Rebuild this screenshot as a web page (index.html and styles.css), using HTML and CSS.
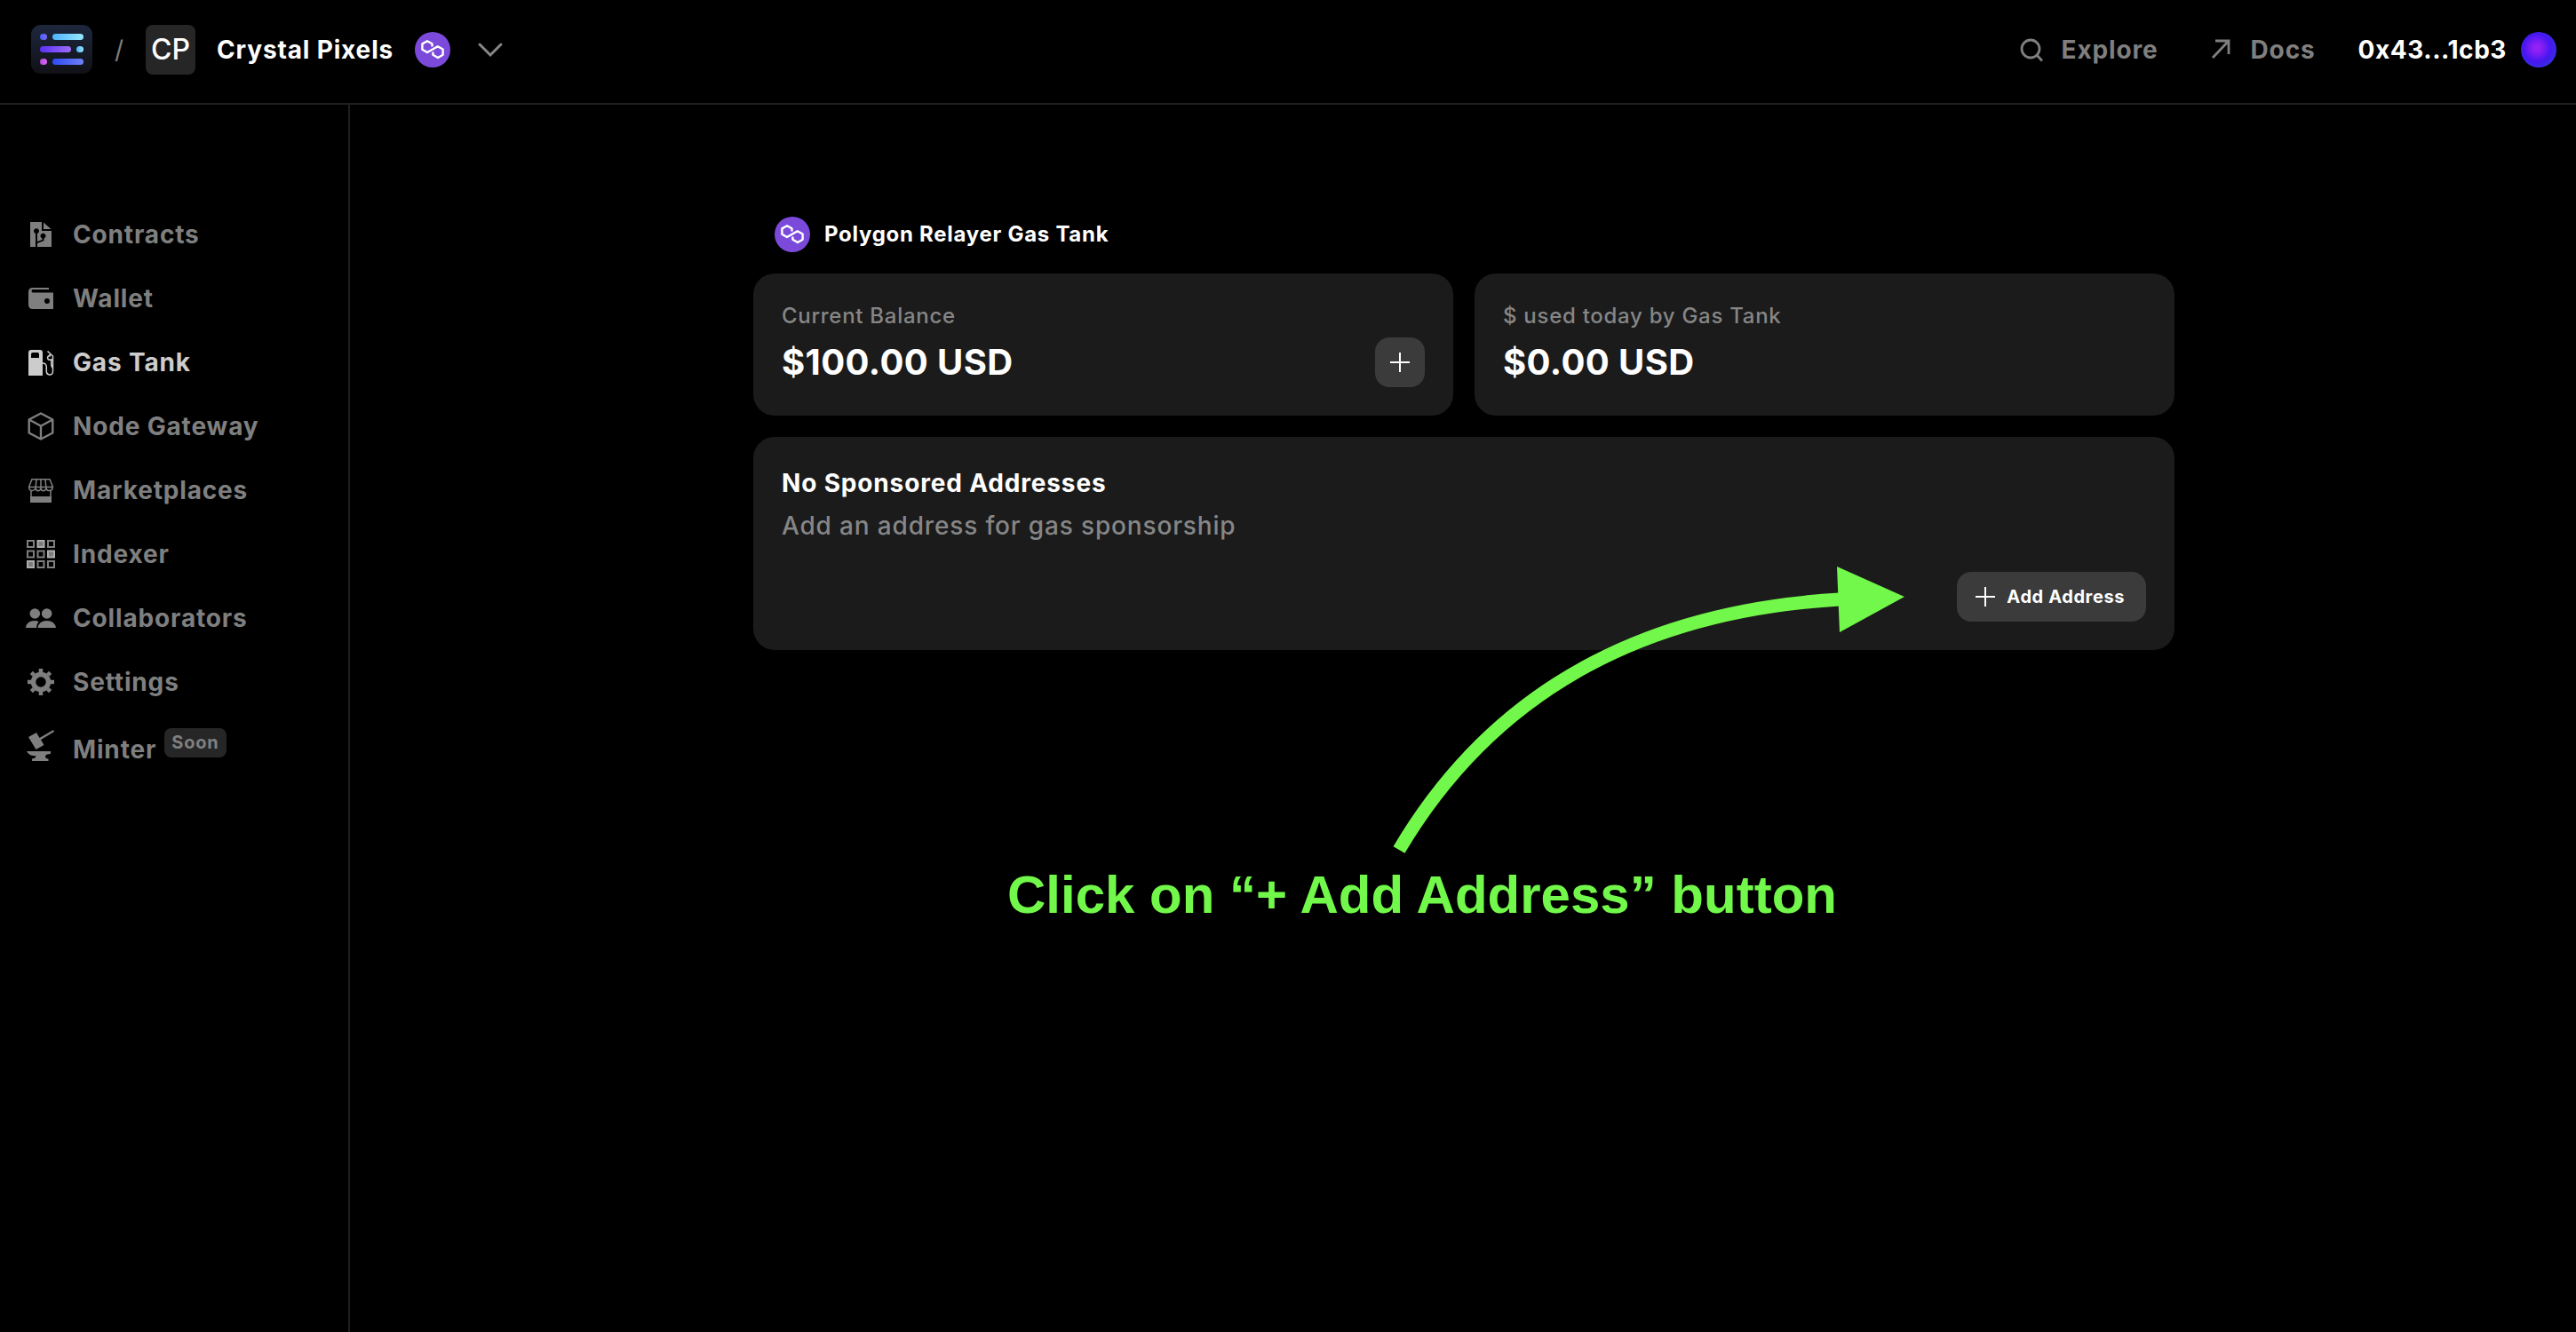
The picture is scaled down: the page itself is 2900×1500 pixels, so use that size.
FILE: index.html
```html
<!DOCTYPE html>
<html lang="en">
<head>
<meta charset="utf-8">
<title>Crystal Pixels – Gas Tank</title>
<link rel="stylesheet" href="styles.css">
</head>
<body>
<svg class="sprite" aria-hidden="true">
  <symbol id="polygon" viewBox="0 0 40 40">
    <circle cx="20" cy="20" r="20" fill="#7b4adb"/>
    <path d="M19.500 16.600V13.300L14 10.200L8.400 13.400V19.800L14 23L25.800 16.200L31.600 19.500V25.800L26 29L20.400 25.800V22.400" fill="none" stroke="#fff" stroke-width="2.400" stroke-linejoin="round"/>
  </symbol>
  <symbol id="plus" viewBox="0 0 24 24">
    <path d="M12 1V23M1 12H23" fill="none" stroke="currentColor" stroke-width="2"/>
  </symbol>
</svg>

<header class="topbar">
  <a class="logo" href="#" aria-label="Home">
    <svg width="70" height="56" viewBox="0 0 70 56">
      <defs>
        <linearGradient id="lg0" x1="0" y1="0" x2="0" y2="1"><stop offset="0" stop-color="#1d273d"/><stop offset="1" stop-color="#111116"/></linearGradient>
        <linearGradient id="lg1"><stop offset="0" stop-color="#4462fe"/><stop offset="1" stop-color="#7d69fa"/></linearGradient>
        <linearGradient id="lg2"><stop offset="0" stop-color="#4fb4ff"/><stop offset="1" stop-color="#96e7fb"/></linearGradient>
        <linearGradient id="lg3"><stop offset="0" stop-color="#5a30f6"/><stop offset="1" stop-color="#9c6df8"/></linearGradient>
        <linearGradient id="lg4"><stop offset="0" stop-color="#b34ce0"/><stop offset="1" stop-color="#d966ee"/></linearGradient>
        <linearGradient id="lg5"><stop offset="0" stop-color="#2e4bf5"/><stop offset="1" stop-color="#7080f5"/></linearGradient>
      </defs>
      <rect x="1" width="69" height="55" rx="11" fill="url(#lg0)"/>
      <rect x="11" y="10" width="8" height="7" rx="3.500" fill="url(#lg1)"/>
      <rect x="25" y="10" width="35" height="7" rx="3.500" fill="url(#lg2)"/>
      <rect x="11" y="24" width="35" height="7" rx="3.500" fill="url(#lg3)"/>
      <rect x="52" y="24" width="8" height="7" rx="3.500" fill="url(#lg2)"/>
      <rect x="11" y="38" width="8" height="7" rx="3.500" fill="url(#lg4)"/>
      <rect x="25" y="38" width="35" height="7" rx="3.500" fill="url(#lg5)"/>
    </svg>
  </a>
  <span class="slash">/</span>
  <button class="project" type="button">
    <span class="initials">CP</span>
    <span class="project-name">Crystal Pixels</span>
    <svg class="chain" width="40" height="40"><use href="#polygon"/></svg>
    <svg class="chevron" width="28" height="16" viewBox="0 0 28 16"><path d="M2 2L14 14L26 2" fill="none" stroke="currentColor" stroke-width="3" stroke-linecap="round"/></svg>
  </button>
  <nav class="topnav">
    <a href="#"><svg width="28" height="28" viewBox="0 0 28 28"><g fill="none" stroke="currentColor" stroke-width="2.800"><circle cx="13" cy="13" r="10"/><path d="M20 20L26 26.500"/></g></svg>Explore</a>
    <a href="#"><svg width="28" height="28" viewBox="0 0 28 28"><path d="M5 23L23 4M8 4H23V19" fill="none" stroke="currentColor" stroke-width="2.800"/></svg>Docs</a>
  </nav>
  <button class="account" type="button">0x43...1cb3<span class="avatar"></span></button>
</header>

<div class="shell">
  <nav class="sidebar">
    <a href="#"><svg class="icon" viewBox="0 0 34 34"><path fill="currentColor" fill-rule="evenodd" d="M5 3H18V13H29V31H13V27L20.500 24V21.500A3 3 0 1 0 18.500 21.500V23L13 25V16A3 3 0 1 0 11 16V31H5ZM20 3.500L28.500 11H20Z"/></svg>Contracts</a>
    <a href="#"><svg class="icon" viewBox="0 0 34 34"><path fill="currentColor" fill-rule="evenodd" d="M26 5V7H7.500Q6.500 7 6.500 8.500Q6.500 10.500 8 10.500H31V29H8Q3 29 3 24V10Q3 5 8 5ZM24 17A3 3 0 1 0 24 23A3 3 0 1 0 24 17Z"/></svg>Wallet</a>
    <a class="active" href="#"><svg class="icon" viewBox="0 0 34 34"><path fill="currentColor" fill-rule="evenodd" d="M6 3H16Q19 3 19 6V32H3V6Q3 3 6 3ZM8 6Q6 6 6 8V12H15V8Q15 6 13.500 6Z"/><path fill="none" stroke="currentColor" stroke-width="1.500" d="M19 18Q23 18 23.300 22V28Q24 31 27 31Q30.500 31 30.500 27V10L24.500 4.500M28 10A2.300 2.300 0 1 0 28 14H30M26 9.500L28 8M29 14Q28 20 30 23"/></svg>Gas Tank</a>
    <a href="#"><svg class="icon" viewBox="0 0 34 34"><path fill="none" stroke="currentColor" stroke-width="2.400" stroke-linejoin="round" d="M17 2.500L30.300 9.500V24.500L17 31.500L3.700 24.500V9.500ZM3.700 9.500L17 16.800L30.300 9.500M17 16.800V31.500"/></svg>Node Gateway</a>
    <a href="#"><svg class="icon" viewBox="0 0 34 34"><path fill="none" stroke="currentColor" stroke-width="1.500" d="M7 4.700H27L30.300 13V14Q29.500 18 26.500 17.500Q24 18 23 15Q22 17.700 19.800 17.700Q17.500 17.700 17 15Q16 17.700 14 17.700Q11.500 17.700 11 15Q9.500 18 7 17.500Q4 17.500 3.700 14V13ZM4 13.500H30M12 4.700L11 15M17 4.700V15M22 4.700L23 15M6 17V30M28 17V30"/><path fill="currentColor" d="M5 24H29V31H5Z"/></svg>Marketplaces</a>
    <a href="#"><svg class="icon" viewBox="0 0 34 34"><g fill="none" stroke="currentColor" stroke-width="2"><path d="M2 2H9V9H2ZM25 2H32V9H25ZM2 13.500H9V20.500H2ZM13.500 13.500H20.500V20.500H13.500ZM13.500 25H20.500V32H13.500ZM25 25H32V32H25Z"/><g fill="#7b7b7b" stroke="#adadad"><path d="M13.500 2H20.500V9H13.500ZM25 13.500H32V20.500H25ZM2 25H9V32H2Z"/></g></g></svg>Indexer</a>
    <a href="#"><svg class="icon" viewBox="0 0 34 34"><g fill="currentColor"><circle cx="10.300" cy="12" r="5.800"/><circle cx="23.700" cy="12" r="5.800"/><path d="M0 28Q1 20 10 20Q13 20 14.500 21Q12 24 12 28ZM13.500 28Q15 20 23.700 20Q32.500 20 34 28Z"/></g></svg>Collaborators</a>
    <a href="#"><svg class="icon" viewBox="0 0 34 34"><circle cx="17" cy="17" r="8.500" fill="none" stroke="currentColor" stroke-width="5.500"/><path d="M17 2V6M17 28V32M2 17H6M28 17H32M6.400 6.400L9.200 9.200M24.800 24.800L27.600 27.600M6.400 27.600L9.200 24.800M24.800 9.200L27.600 6.400" stroke="currentColor" stroke-width="4.500"/></svg>Settings</a>
    <a class="minter" href="#"><svg class="icon" viewBox="0 0 34 34"><path fill="currentColor" d="M3 5L12 0L15.500 6L31 -3L32 -1L17 8L20.500 14L11.500 19ZM1 21H28V24Q22 24 22 27Q22 29 25.500 29.500V32H7V29.500Q11.500 29 11.500 26Q4 27 1 21Z"/></svg><span>Minter</span><span class="badge">Soon</span></a>
  </nav>

  <main class="content">
    <h1 class="tank-title"><svg width="40" height="40"><use href="#polygon"/></svg>Polygon Relayer Gas Tank</h1>
    <div class="stats">
      <section class="card">
        <p class="label">Current Balance</p>
        <div class="row">
          <p class="amount">$100.00 USD</p>
          <button class="btn square" type="button" aria-label="Add balance"><svg width="24" height="24"><use href="#plus"/></svg></button>
        </div>
      </section>
      <section class="card">
        <p class="label">$ used today by Gas Tank</p>
        <div class="row"><p class="amount">$0.00 USD</p></div>
      </section>
    </div>
    <section class="card sponsor">
      <h2>No Sponsored Addresses</h2>
      <p class="hint">Add an address for gas sponsorship</p>
      <button class="btn" type="button"><svg width="24" height="24"><use href="#plus"/></svg>Add Address</button>
      <div class="callout">
        <svg width="580" height="326" viewBox="1566 636 580 326">
          <path d="M1575 957Q1730 695 2071 675" fill="none" stroke="#72f84a" stroke-width="15"/>
          <path d="M2068 638L2144 672L2071 712Z" fill="#72f84a"/>
        </svg>
        <p>Click on “+ Add Address” button</p>
      </div>
    </section>
  </main>
</div>
</body>
</html>
```
FILE: styles.css
```css
* { box-sizing: border-box; }

body {
  margin: 0;
  min-height: 100vh;
  display: flex;
  flex-direction: column;
  background: #000;
  color: #fff;
  font-family: Inter, "Liberation Sans", sans-serif;
  font-size: 28px;
  line-height: 40px;
}

h1, h2, p { margin: 0; }
a { color: inherit; text-decoration: none; }
svg { display: block; flex: none; overflow: visible; }
.sprite { position: absolute; width: 0; height: 0; }

button {
  border: 0;
  padding: 0;
  background: none;
  color: inherit;
  font: inherit;
  cursor: pointer;
}

/* Top bar */
.topbar {
  display: flex;
  align-items: center;
  height: 118px;
  padding: 0 22px 4px 34px;
  border-bottom: 2px solid #1f1f1f;
  font-weight: 700;
}
.slash {
  width: 60px;
  text-align: center;
  color: #7f7f7f;
  font-weight: 400;
}
.project {
  display: flex;
  align-items: center;
  gap: 24px;
}
.initials {
  width: 56px;
  height: 56px;
  border-radius: 8px;
  background: #262626;
  font-size: 32px;
  font-weight: 500;
  line-height: 56px;
}
.project-name { letter-spacing: 0.03em; }
.chevron { margin-left: 7px; color: #868686; }

.topnav {
  display: flex;
  gap: 56px;
  margin-left: auto;
  color: #7f7f7f;
  letter-spacing: 0.03em;
}
.topnav a { display: flex; align-items: center; gap: 20px; }
.account {
  display: flex;
  align-items: center;
  gap: 16px;
  margin-left: 48px;
  letter-spacing: 0.02em;
}
.avatar {
  width: 40px;
  height: 40px;
  border-radius: 50%;
  background: radial-gradient(circle at 45% 45%, #9a22f4 0, #8a20f4 16%, #4517f0 50%, #3a2ae0 70%, #2f55b0 100%);
}

/* Body */
.shell { display: flex; flex: 1; }
.sidebar {
  flex: none;
  width: 394px;
  padding: 126px 0 0 29px;
  border-right: 2px solid #1f1f1f;
  color: #7f7f7f;
  font-weight: 700;
  letter-spacing: 0.03em;
}
.sidebar a {
  display: flex;
  align-items: center;
  height: 40px;
  margin-bottom: 32px;
}
.sidebar .active { color: #ccc; }
.icon { width: 34px; height: 34px; margin-right: 19px; }
.sidebar .minter { height: 44px; align-items: flex-end; }
.minter .icon { align-self: center; }
.badge {
  align-self: flex-start;
  margin-left: 9px;
  padding: 0 8px;
  border-radius: 8px;
  background: #262626;
  font-size: 20px;
  line-height: 33px;
}

.content {
  flex: 1;
  max-width: 1602px;
  margin: 0 auto;
  padding: 126px 0 0 2px;
}
.tank-title {
  display: flex;
  align-items: center;
  gap: 16px;
  margin: 0 0 24px 24px;
  font-size: 24px;
  font-weight: 700;
  letter-spacing: 0.03em;
}
.stats {
  display: grid;
  grid-template-columns: 1fr 1fr;
  gap: 24px;
  margin-bottom: 24px;
}
.card {
  padding: 32px;
  border-radius: 24px;
  background: #1b1b1b;
}
.label {
  margin-bottom: 8px;
  color: #868686;
  font-size: 24px;
  line-height: 32px;
  font-weight: 500;
  letter-spacing: 0.03em;
}
.row {
  display: flex;
  align-items: center;
  justify-content: space-between;
  height: 56px;
}
.amount { font-size: 40px; font-weight: 700; letter-spacing: 0.01em; }
.btn {
  display: flex;
  align-items: center;
  gap: 12px;
  height: 56px;
  padding: 0 24px 0 20px;
  border-radius: 16px;
  background: #3b3b3b;
  font-size: 20px;
  font-weight: 700;
  letter-spacing: 0.03em;
}
.square { width: 56px; padding: 0; justify-content: center; }

.sponsor {
  position: relative;
  display: flex;
  flex-direction: column;
  gap: 8px;
}
.sponsor h2 { font-size: 28px; font-weight: 700; letter-spacing: 0.03em; }
.sponsor .btn { align-self: flex-end; margin-top: 24px; }
.hint { color: #868686; font-weight: 500; letter-spacing: 0.03em; }

/* Tutorial callout drawn over the card */
.callout {
  position: absolute;
  top: 144px;
  left: 286px;
  color: #72f84a;
  font: 700 60px/72px "Liberation Sans", Arial, sans-serif;
  white-space: nowrap;
}
.callout svg { margin-left: 432px; }
.callout p { margin-top: 10px; }
```
